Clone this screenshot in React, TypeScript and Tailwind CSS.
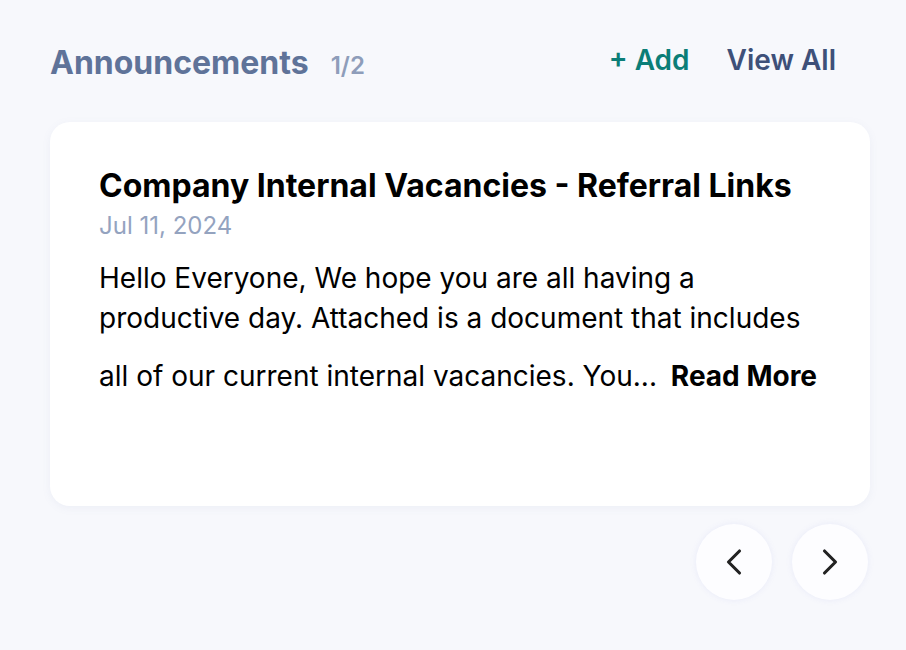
import { ChevronLeft, ChevronRight } from "lucide-react";

export default function App() {
  return (
    <div className="min-h-[650px] w-full bg-[#f7f8fc] font-['Inter',sans-serif] pl-[50px] pr-[36px] pt-[43px]">
      <div className="flex items-start justify-between pr-[34px]">
        <div className="flex items-baseline gap-[22px]">
          <h2 className="text-[32px] leading-[40px] font-bold text-[#5f7399]">Announcements</h2>
          <span className="text-[24px] leading-[40px] font-semibold text-[#8e9dba]">1/2</span>
        </div>
        <div className="flex items-start gap-[37px] -mt-[3px]">
          <button className="text-[28px] leading-[40px] font-semibold text-[#0b7e77]">+ Add</button>
          <button className="text-[28px] leading-[40px] font-semibold text-[#3e5079]">View All</button>
        </div>
      </div>

      <div className="mt-[36px] h-[384px] rounded-[20px] bg-white shadow-[0_2px_8px_rgba(120,130,180,0.08)] pl-[49px] pr-[40px] pt-[44px]">
        <h3 className="text-[32px] font-bold text-black leading-[40px]">
          Company Internal Vacancies - Referral Links
        </h3>
        <p className="text-[24px] text-[#94a3bf] leading-[32px] mt-[4px]">Jul 11, 2024</p>
        <p className="mt-[16px] text-[28px] leading-[40px] text-black">
          Hello Everyone, We hope you are all having a productive day. Attached is a document that includes all of our current internal vacancies. You...<span className="inline-block h-[48px] w-0" />{" "}
          <span className="ml-[6px] font-bold whitespace-nowrap">Read More</span>
        </p>
      </div>

      <div className="mt-[18px] flex justify-end gap-[20px] pr-[2px]">
        <button className="flex h-[76px] w-[76px] items-center justify-center rounded-full bg-[#fdfdff] shadow-[0_0_6px_rgba(130,140,220,0.12)]">
          <ChevronLeft className="h-[44px] w-[44px] text-[#222]" strokeWidth={1.7} />
        </button>
        <button className="flex h-[76px] w-[76px] items-center justify-center rounded-full bg-[#fdfdff] shadow-[0_0_6px_rgba(130,140,220,0.12)]">
          <ChevronRight className="h-[44px] w-[44px] text-[#222]" strokeWidth={1.7} />
        </button>
      </div>
    </div>
  );
}
